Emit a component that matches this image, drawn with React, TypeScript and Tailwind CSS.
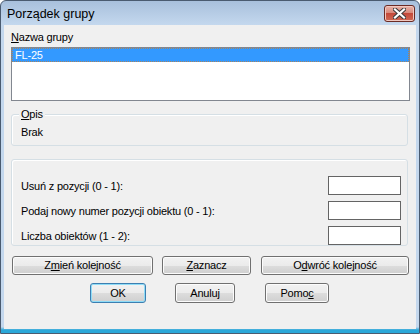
import React from "react";

const F = { fontFamily: '"Liberation Sans", Arial, sans-serif' };

function Btn({
  children,
  w,
  h,
  def,
}: {
  children: React.ReactNode;
  w: string;
  h: string;
  def?: boolean;
}) {
  return (
    <div
      className={`${w} ${h} shrink-0 rounded-[3px] border ${
        def ? "border-[#3c7fb1] shadow-[inset_0_0_0_1px_#8fdcf7]" : "border-[#707070] shadow-[inset_0_0_0_1px_#fcfcfc]"
      } bg-[linear-gradient(to_bottom,#f2f2f2_0%,#ebebeb_50%,#dddddd_50%,#cfcfcf_100%)] flex items-center justify-center text-[11px] leading-[13px] text-black`}
    >
      {children}
    </div>
  );
}

export default function App() {
  return (
    <div
      style={F}
      className="w-[420px] h-[334px] border border-[#4a5b70] rounded-t-[6px] flex flex-col bg-[linear-gradient(to_bottom,#a8c0dc_0px,#c4d8ee_24px,#c4d8ee_326px,#2aa7d8_329px)]"
    >
      {/* title bar */}
      <div className="h-[24px] shrink-0 flex justify-between pl-[6px] pr-[4px]">
        <div className="pt-[6px] text-[12.5px] leading-[14px] text-black">Porządek grupy</div>
        <div className="mt-[4px] w-[31px] h-[17px] rounded-[3px] border border-[#6b2b24] bg-[linear-gradient(to_bottom,#e8b3a8_0%,#d98a7c_45%,#c4493a_50%,#cf6a55_100%)] flex items-center justify-center shadow-[inset_0_0_0_1px_#f0c8c0]">
          <svg width="13" height="11" viewBox="0 0 13 11">
            <path d="M2 1.5 L11 9.5 M11 1.5 L2 9.5" stroke="#3a3a3a" strokeWidth="4.2" strokeLinecap="square" />
            <path d="M2 1.5 L11 9.5 M11 1.5 L2 9.5" stroke="#ffffff" strokeWidth="2.2" strokeLinecap="square" />
          </svg>
        </div>
      </div>

      {/* client */}
      <div className="mx-[3px] mb-[4px] flex-1 bg-[#f0f0f0] pt-[5px] flex flex-col text-[11px] tracking-[-0.2px] text-black">
        <div className="ml-[7px] h-[14px] leading-[14px]">
          <span className="underline">N</span>azwa grupy
        </div>
        <div className="ml-[7px] mt-[3px] w-[399px] h-[54px] border border-[#828790] bg-white p-0">
          <div className="h-[14px] bg-[#3399ff] border border-dotted border-[#a8845c] text-white leading-[12px] pl-[2px]">
            FL-25
          </div>
        </div>

        {/* Opis group */}
        <div className="ml-[7px] mt-[13px] w-[397px] h-[32px] relative rounded-[3px] border border-[#d5dfe5] shadow-[inset_1px_1px_0_#ffffff]">
          <div className="absolute left-[7px] top-[-8px] px-[2px] bg-[#f0f0f0] leading-[14px]">
            <span className="underline">O</span>pis
          </div>
          <div className="pl-[9px] pt-[10px] leading-[14px]">Brak</div>
        </div>

        {/* second group */}
        <div className="ml-[7px] mt-[13px] w-[397px] h-[87px] rounded-[3px] border border-[#d5dfe5] shadow-[inset_1px_1px_0_#ffffff] pt-[16px] pl-[9px] flex flex-col gap-[6px]">
          {[
            "Usuń z pozycji (0 - 1):",
            "Podaj nowy numer pozycji obiektu (0 - 1):",
            "Liczba obiektów (1 - 2):",
          ].map((t) => (
            <div key={t} className="h-[19px] flex items-center justify-between pr-[6px]">
              <span className="leading-[14px]">{t}</span>
              <div className="w-[73px] h-[19px] border border-[#646464] bg-white" />
            </div>
          ))}
        </div>

        {/* row 1 buttons */}
        <div className="mt-[10px] ml-[8px] flex">
          <Btn w="w-[141px]" h="h-[19px]">
            Z<span className="underline">m</span>ień kolejność
          </Btn>
          <div className="w-[9px]" />
          <Btn w="w-[89px]" h="h-[19px]">
            <span className="underline">Z</span>aznacz
          </Btn>
          <div className="w-[10px]" />
          <Btn w="w-[148px]" h="h-[19px]">
            O<span className="underline">d</span>wróć kolejność
          </Btn>
        </div>

        {/* row 2 buttons */}
        <div className="mt-[8px] ml-[86px] flex">
          <Btn w="w-[56px]" h="h-[20px]" def>
            OK
          </Btn>
          <div className="w-[29px]" />
          <Btn w="w-[60px]" h="h-[20px]">
            Anuluj
          </Btn>
          <div className="w-[30px]" />
          <Btn w="w-[64px]" h="h-[20px]">
            Pomo<span className="underline">c</span>
          </Btn>
        </div>
      </div>
    </div>
  );
}
